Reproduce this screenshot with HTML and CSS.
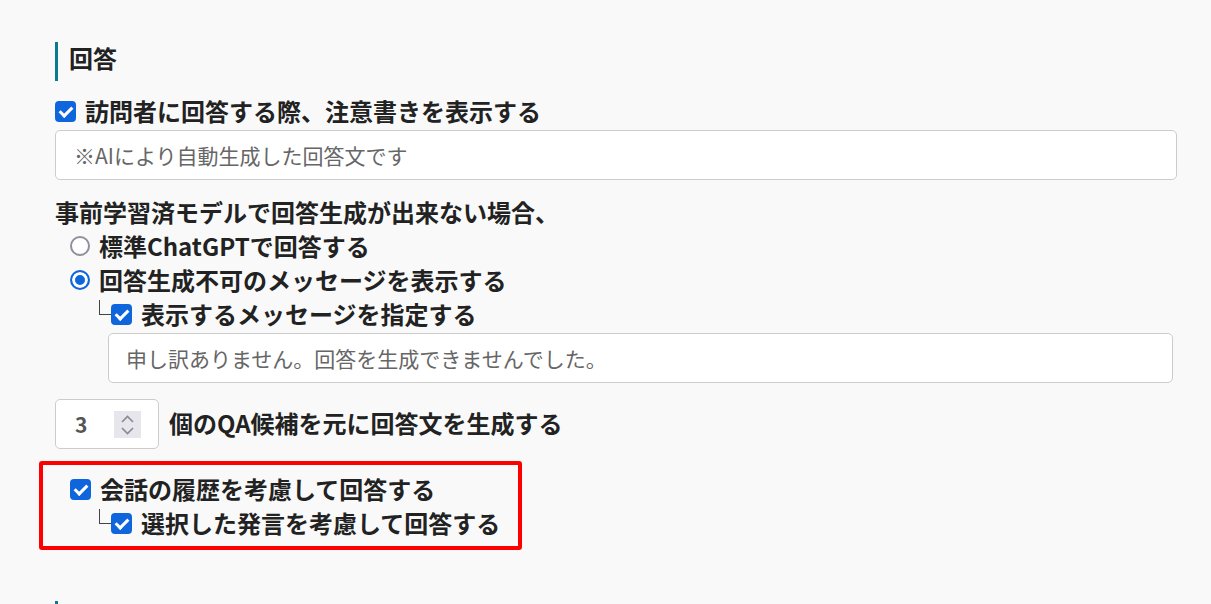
FILE: index.html
```html
<!DOCTYPE html>
<html lang="ja">
<head>
    <meta charset="UTF-8">
    <link rel="stylesheet" href="styles.css">
</head>
<body>

    <div class="section">
        <h2 class="heading">回答</h2>

        <label class="row">
            <input type="checkbox" checked>
            <span>訪問者に回答する際、注意書きを表示する</span>
        </label>
        <input type="text" class="field" placeholder="※AIにより自動生成した回答文です">

        <p class="question">事前学習済モデルで回答生成が出来ない場合、</p>
        <label class="row tight indent">
            <input type="radio" name="fallback">
            <span>標準ChatGPTで回答する</span>
        </label>
        <label class="row tight indent">
            <input type="radio" name="fallback" checked>
            <span>回答生成不可のメッセージを表示する</span>
        </label>
        <label class="row tight sub">
            <span class="branch"></span>
            <input type="checkbox" checked>
            <span>表示するメッセージを指定する</span>
        </label>
        <input type="text" class="field sub-field" placeholder="申し訳ありません。回答を生成できませんでした。">

        <div class="count-row">
            <div class="number">
                <span class="number-value">3</span>
                <span class="spinner">
                    <svg width="27" height="27" viewBox="0 0 27 27">
                        <path d="M8 11 L13.5 5.5 L19 11" fill="none" stroke="#8a8a94" stroke-width="1.7"/>
                        <path d="M8 17 L13.5 22.5 L19 17" fill="none" stroke="#8a8a94" stroke-width="1.7"/>
                    </svg>
                </span>
            </div>
            <span class="count-label">個のQA候補を元に回答文を生成する</span>
        </div>

        <div class="highlight">
            <label class="row tight">
                <input type="checkbox" checked>
                <span>会話の履歴を考慮して回答する</span>
            </label>
            <label class="row tight sub nested">
                <span class="branch"></span>
                <input type="checkbox" checked>
                <span>選択した発言を考慮して回答する</span>
            </label>
        </div>

        <div class="heading next"></div>
    </div>

</body>
</html>
```

FILE: styles.css
```css
body {
    margin: 0;
    background-color: #f9f9f9;
    color: #222;
    font-family: "Noto Sans CJK JP", "Noto Sans", sans-serif;
    overflow: hidden;
}

.section {
    padding: 42px 34px 0 55px;
}

.heading {
    margin: 0;
    height: 39px;
    border-left: 3px solid #0b7a8a;
    padding-left: 11px;
    font-size: 24px;
    font-weight: bold;
    line-height: 31px;
}

.heading.next {
    margin-top: 51px;
}

.row {
    display: flex;
    align-items: center;
    gap: 9px;
    margin-top: 12px;
    height: 36px;
    font-size: 24px;
    font-weight: bold;
    line-height: 1;
}

.row.tight {
    margin-top: 0;
    height: 34px;
}

.indent {
    padding-left: 15px;
}

.sub {
    padding-left: 44px;
    gap: 0;
}

.sub.nested {
    padding-left: 29px;
}

.branch {
    align-self: flex-start;
    width: 11px;
    height: 14px;
    margin-top: 3px;
    border-left: 1px solid #444;
    border-bottom: 1px solid #444;
}

/* hand-drawn checkbox and radio */
input[type="checkbox"],
input[type="radio"] {
    appearance: none;
    position: relative;
    box-sizing: border-box;
    width: 21px;
    height: 21px;
    margin: 0;
    flex: none;
    background: #fff;
}

input[type="checkbox"] {
    border-radius: 4px;
    border: 2px solid #8f8f9d;
}

input[type="checkbox"]:checked {
    background: #0f66dc;
    border-color: #0f66dc;
}

input[type="checkbox"]:checked::after {
    content: "";
    position: absolute;
    left: 5px;
    top: 1px;
    width: 5px;
    height: 10px;
    border-right: 3px solid #fff;
    border-bottom: 3px solid #fff;
    transform: rotate(45deg);
}

input[type="radio"] {
    width: 20px;
    height: 20px;
    border-radius: 50%;
    border: 2.5px solid #8f8f9d;
}

input[type="radio"]:checked {
    border-color: #0f66dc;
    background: #0f66dc;
    box-shadow: inset 0 0 0 3px #fff;
}

.sub input[type="checkbox"] {
    margin-right: 9px;
}

.field {
    display: block;
    box-sizing: border-box;
    width: 100%;
    height: 50px;
    margin: 1px 0 0 0;
    padding: 0 18px;
    border: 1px solid #ccc;
    border-radius: 5px;
    background: #fff;
    font-family: inherit;
    font-size: 21px;
}

.field::placeholder {
    color: #666;
}

.sub-field {
    width: calc(100% - 57px);
    margin: 2px 0 0 53px;
    padding-left: 17px;
}

.question {
    margin: 15px 0 0 0;
    height: 34px;
    line-height: 34px;
    font-size: 24px;
    font-weight: bold;
}

.count-row {
    display: flex;
    align-items: center;
    gap: 10px;
    margin-top: 16px;
}

.number {
    box-sizing: border-box;
    width: 104px;
    height: 50px;
    display: flex;
    align-items: center;
    padding-left: 19px;
    border: 1px solid #ccc;
    border-radius: 5px;
    background: #fff;
}

.number-value {
    width: 39px;
    font-size: 21px;
    font-weight: bold;
    color: #555;
}

.spinner {
    width: 27px;
    height: 27px;
    display: flex;
    background: #e6e6ec;
}

.count-label {
    font-size: 24px;
    font-weight: bold;
    line-height: 1;
    margin-top: -3px;
}

.highlight {
    width: fit-content;
    margin: 12px 0 0 -16px;
    padding: 7px 18px 6px 27px;
    border: 4px solid #ff0000;
    border-radius: 3px;
}
```
